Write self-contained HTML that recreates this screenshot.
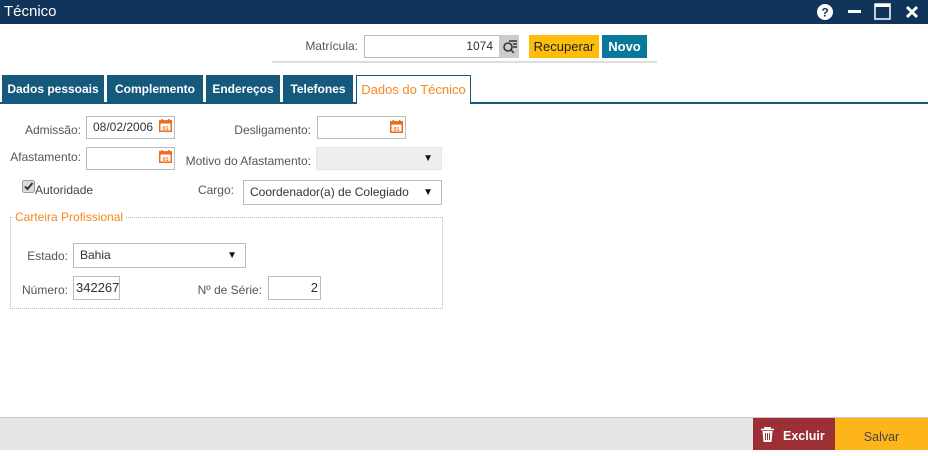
<!DOCTYPE html>
<html><head><meta charset="utf-8"><style>
*{box-sizing:border-box;margin:0;padding:0}
body{width:928px;height:450px;position:relative;overflow:hidden;background:#fff;font-family:"Liberation Sans",sans-serif;font-size:12px;color:#444}
.a{position:absolute}
.lbl{position:absolute;color:#555;font-size:12px;text-align:right}
.inp{position:absolute;border:1px solid #bbb;background:#fff;height:23px;font-size:12px;color:#333;line-height:21px;padding:0 6px}
.tab{position:absolute;top:75px;height:28px;background:#155a7d;color:#fff;font-weight:bold;font-size:12px;line-height:28px;text-align:center}
.cal{position:absolute;width:13px;height:13px}
.arr{position:absolute;right:8px;top:0;font-size:10px;color:#111}
</style></head><body>
<div class="a" style="left:0;top:0;width:928px;height:24px;background:#10345a"></div>
<div class="a" style="left:4px;top:3px;color:#fff;font-size:15px">Técnico</div>
<svg class="a" style="left:816px;top:3px" width="18" height="18"><circle cx="9" cy="9" r="8" fill="#fff"/><text x="9" y="13.5" text-anchor="middle" font-family="Liberation Sans" font-weight="bold" font-size="12" fill="#10345a">?</text></svg>
<div class="a" style="left:848px;top:10px;width:13px;height:3px;background:#fff"></div>
<svg class="a" style="left:874px;top:3px" width="18" height="18"><rect x="1" y="1" width="15" height="15" fill="none" stroke="#fff" stroke-width="1.5"/><rect x="1" y="1" width="15" height="3" fill="#fff"/></svg>
<svg class="a" style="left:905px;top:5px" width="14" height="14"><path d="M2 2L12 12M12 2L2 12" stroke="#fff" stroke-width="3"/></svg>

<div class="lbl" style="left:300px;top:39px;width:58px">Matrícula:</div>
<div class="inp" style="left:364px;top:35px;width:136px;text-align:right">1074</div>
<div class="a" style="left:499px;top:35px;width:20px;height:23px;background:#ccc"></div>
<svg class="a" style="left:502px;top:38px" width="16" height="16"><circle cx="6" cy="9" r="4" fill="none" stroke="#333" stroke-width="1.6"/><path d="M9 12L12 15M7 3H15M11 6H15M11 9H15" stroke="#333" stroke-width="1.5"/></svg>
<div class="a" style="left:529px;top:35px;width:70px;height:23px;background:#fdbd0a;color:#222;font-size:13px;line-height:23px;text-align:center">Recuperar</div>
<div class="a" style="left:602px;top:35px;width:45px;height:23px;background:#08799a;color:#fff;font-weight:bold;font-size:13px;line-height:23px;text-align:center">Novo</div>
<div class="a" style="left:272px;top:61px;width:385px;height:2px;background:#ddd"></div>

<div class="tab" style="left:2px;width:102px">Dados pessoais</div>
<div class="tab" style="left:107px;width:96px">Complemento</div>
<div class="tab" style="left:206px;width:74px">Endereços</div>
<div class="tab" style="left:283px;width:70px">Telefones</div>
<div class="a" style="left:0;top:102px;width:928px;height:2px;background:#155a7d"></div>
<div class="a" style="left:356px;top:75px;width:115px;height:29px;background:#fff;border:1px solid #155a7d;border-bottom:none;color:#f7871e;font-size:13px;line-height:28px;text-align:center">Dados do Técnico</div>

<div class="lbl" style="left:10px;top:123px;width:71px">Admissão:</div>
<div class="inp" style="left:86px;top:116px;width:89px">08/02/2006</div>
<div class="lbl" style="left:200px;top:123px;width:111px">Desligamento:</div>
<div class="inp" style="left:317px;top:116px;width:89px"></div>
<div class="lbl" style="left:0;top:150px;width:81px">Afastamento:</div>
<div class="inp" style="left:86px;top:147px;width:89px"></div>
<div class="lbl" style="left:180px;top:154px;width:131px">Motivo do Afastamento:</div>
<div class="inp" style="left:316px;top:147px;width:126px;background:#efefef;border-color:#e5e5e5"><span class="arr">▼</span></div>
<svg class="a" style="left:22px;top:180px" width="13" height="13"><rect x="0.5" y="0.5" width="12" height="12" rx="2" fill="#ddd" stroke="#999"/><path d="M3 6.5L5.5 9L10.5 3" fill="none" stroke="#333" stroke-width="2"/></svg>
<div class="a" style="left:35px;top:183px;color:#444">Autoridade</div>
<div class="lbl" style="left:190px;top:183px;width:44px">Cargo:</div>
<div class="inp" style="left:243px;top:180px;width:199px;height:25px;line-height:23px">Coordenador(a) de Colegiado<span class="arr">▼</span></div>

<div class="a" style="left:10px;top:217px;width:433px;height:92px;border:1px dotted #bbb"></div>
<div class="a" style="left:13px;top:210px;background:#fff;padding:0 2px;color:#f7871e;font-size:12px">Carteira Profissional</div>
<div class="lbl" style="left:20px;top:249px;width:48px">Estado:</div>
<div class="inp" style="left:73px;top:243px;width:173px;height:25px;line-height:23px">Bahia<span class="arr">▼</span></div>
<div class="lbl" style="left:10px;top:283px;width:58px">Número:</div>
<div class="inp" style="left:73px;top:276px;width:47px;height:24px;padding:0 2px;font-size:13px">342267</div>
<div class="lbl" style="left:190px;top:283px;width:72px">Nº de Série:</div>
<div class="inp" style="left:268px;top:276px;width:53px;height:24px;text-align:right;padding:0 2px;font-size:13px">2</div>

<svg class="cal" style="left:159px;top:119px" viewBox="0 0 12 12"><rect x="0.7" y="1.7" width="10.6" height="9.6" fill="none" stroke="#f06a1c" stroke-width="1.4"/><rect x="0.7" y="1.7" width="10.6" height="2.5" fill="#f06a1c"/><path d="M3 0V3M9 0V3" stroke="#f06a1c" stroke-width="1.4"/><text x="6" y="10" text-anchor="middle" font-size="5" font-family="Liberation Sans" font-weight="bold" fill="#f06a1c">01</text></svg>
<svg class="cal" style="left:390px;top:120px" viewBox="0 0 12 12"><rect x="0.7" y="1.7" width="10.6" height="9.6" fill="none" stroke="#f06a1c" stroke-width="1.4"/><rect x="0.7" y="1.7" width="10.6" height="2.5" fill="#f06a1c"/><path d="M3 0V3M9 0V3" stroke="#f06a1c" stroke-width="1.4"/><text x="6" y="10" text-anchor="middle" font-size="5" font-family="Liberation Sans" font-weight="bold" fill="#f06a1c">01</text></svg>
<svg class="cal" style="left:159px;top:150px" viewBox="0 0 12 12"><rect x="0.7" y="1.7" width="10.6" height="9.6" fill="none" stroke="#f06a1c" stroke-width="1.4"/><rect x="0.7" y="1.7" width="10.6" height="2.5" fill="#f06a1c"/><path d="M3 0V3M9 0V3" stroke="#f06a1c" stroke-width="1.4"/><text x="6" y="10" text-anchor="middle" font-size="5" font-family="Liberation Sans" font-weight="bold" fill="#f06a1c">01</text></svg>

<div class="a" style="left:0;top:417px;width:928px;height:33px;background:#e6e6e6;border-top:1px solid #ccc"></div>
<div class="a" style="left:753px;top:418px;width:82px;height:32px;background:#9c2f35"></div>
<svg class="a" style="left:761px;top:427px" width="13" height="15"><path d="M0 2.5H13M4 2.5V0.8H9V2.5" stroke="#fff" stroke-width="1.6" fill="none"/><path d="M1.5 4H11.5L10.5 15H2.5Z" fill="#fff"/><path d="M4.5 6V13M6.5 6V13M8.5 6V13" stroke="#9c2f35" stroke-width="1"/></svg>
<div class="a" style="left:783px;top:429px;color:#fff;font-weight:bold;font-size:12.5px">Excluir</div>
<div class="a" style="left:835px;top:418px;width:93px;height:32px;background:#fdb51a;color:#444;font-size:12.5px;line-height:38px;text-align:center">Salvar</div>
</body></html>
